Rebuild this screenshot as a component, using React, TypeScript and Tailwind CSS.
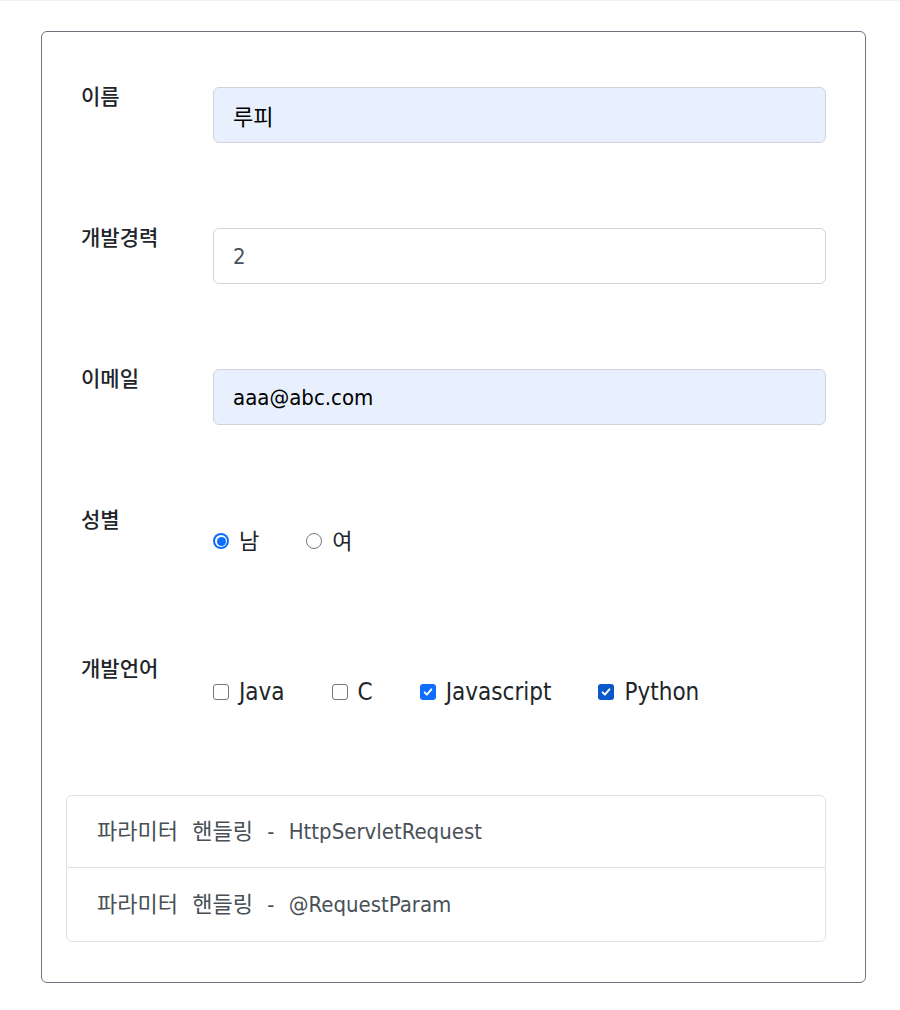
import React from 'react';

const font = "font-['DejaVu_Sans_Condensed','Noto_Sans_CJK_KR',sans-serif]";

function Label({ children }: { children: React.ReactNode }) {
  return (
    <div className="w-[132px] shrink-0 text-[21px] leading-[26px] font-medium text-[#212529] -mt-[3px]">
      {children}
    </div>
  );
}

function TextRow({ label, value, autofill }: { label: string; value: string; autofill?: boolean }) {
  return (
    <div className="flex h-[141px]">
      <Label>{label}</Label>
      <input
        readOnly
        value={value}
        className={`h-[56px] flex-1 rounded-[6px] border border-[#ced4da] px-[19px] text-[22px] outline-none ${
          autofill ? 'bg-[#e8f0fe] text-black' : 'bg-white text-[#495057]'
        }`}
      />
    </div>
  );
}

function Radio({ checked }: { checked?: boolean }) {
  return checked ? (
    <span className="w-4 h-4 rounded-full bg-[#0d6efd] flex items-center justify-center shrink-0">
      <span className="w-[12px] h-[12px] rounded-full bg-white flex items-center justify-center">
        <span className="w-[9px] h-[9px] rounded-full bg-[#0d6efd]" />
      </span>
    </span>
  ) : (
    <span className="w-4 h-4 rounded-full border border-[#767676] bg-white shrink-0" />
  );
}

function Check({ checked, color }: { checked?: boolean; color: string }) {
  if (!checked) return <span className="w-4 h-4 rounded-[3px] border border-[#767676] bg-white shrink-0" />;
  return (
    <span className={`w-4 h-4 rounded-[3px] flex items-center justify-center shrink-0 ${color}`}>
      <svg viewBox="0 0 16 16" className="w-[12px] h-[12px]" fill="none" stroke="white" strokeWidth="2.6" strokeLinecap="round" strokeLinejoin="round">
        <path d="M3.5 8.5l3 3 6-7" />
      </svg>
    </span>
  );
}

const langs = [
  { name: 'Java', checked: false, color: 'bg-[#0d6efd]' },
  { name: 'C', checked: false, color: 'bg-[#0d6efd]' },
  { name: 'Javascript', checked: true, color: 'bg-[#0d6efd]' },
  { name: 'Python', checked: true, color: 'bg-[#0a58ca]' },
];

export default function App() {
  return (
    <div className={`min-h-[1010px] bg-white border-t border-[#f2f2f2] ${font}`}>
      <div className="ml-[41px] mt-[30px] w-[825px] rounded-[6px] border border-[#6c757d] pt-[55px] pb-[40px] pl-[24px] pr-[39px]">
        <div className="pl-[15px]">
          <TextRow label="이름" value="루피" autofill />
          <TextRow label="개발경력" value="2" />
          <TextRow label="이메일" value="aaa@abc.com" autofill />

          <div className="flex h-[149px]">
            <Label>성별</Label>
            <div className="flex items-center h-[20px] mt-[21px] text-[22px] text-[#212529]">
              <div className="flex items-center mr-[47px]">
                <Radio checked />
                <span className="ml-[10px]">남</span>
              </div>
              <div className="flex items-center">
                <Radio />
                <span className="ml-[10px]">여</span>
              </div>
            </div>
          </div>

          <div className="flex h-[136px]">
            <Label>개발언어</Label>
            <div className="flex items-center h-[20px] mt-[23px] text-[24px] text-[#212529]">
              {langs.map((l) => (
                <div key={l.name} className="flex items-center mr-[47px]">
                  <Check checked={l.checked} color={l.color} />
                  <span className="ml-[10px]">{l.name}</span>
                </div>
              ))}
            </div>
          </div>
        </div>

        <ul className="rounded-[6px] border border-[#dee2e6] text-[22px] text-[#495057] [word-spacing:8px]">
          <li className="h-[72px] flex items-center px-[30px] border-b border-[#dee2e6]">
            파라미터 핸들링 - HttpServletRequest
          </li>
          <li className="h-[73px] flex items-center px-[30px]">파라미터 핸들링 - @RequestParam</li>
        </ul>
      </div>
    </div>
  );
}
